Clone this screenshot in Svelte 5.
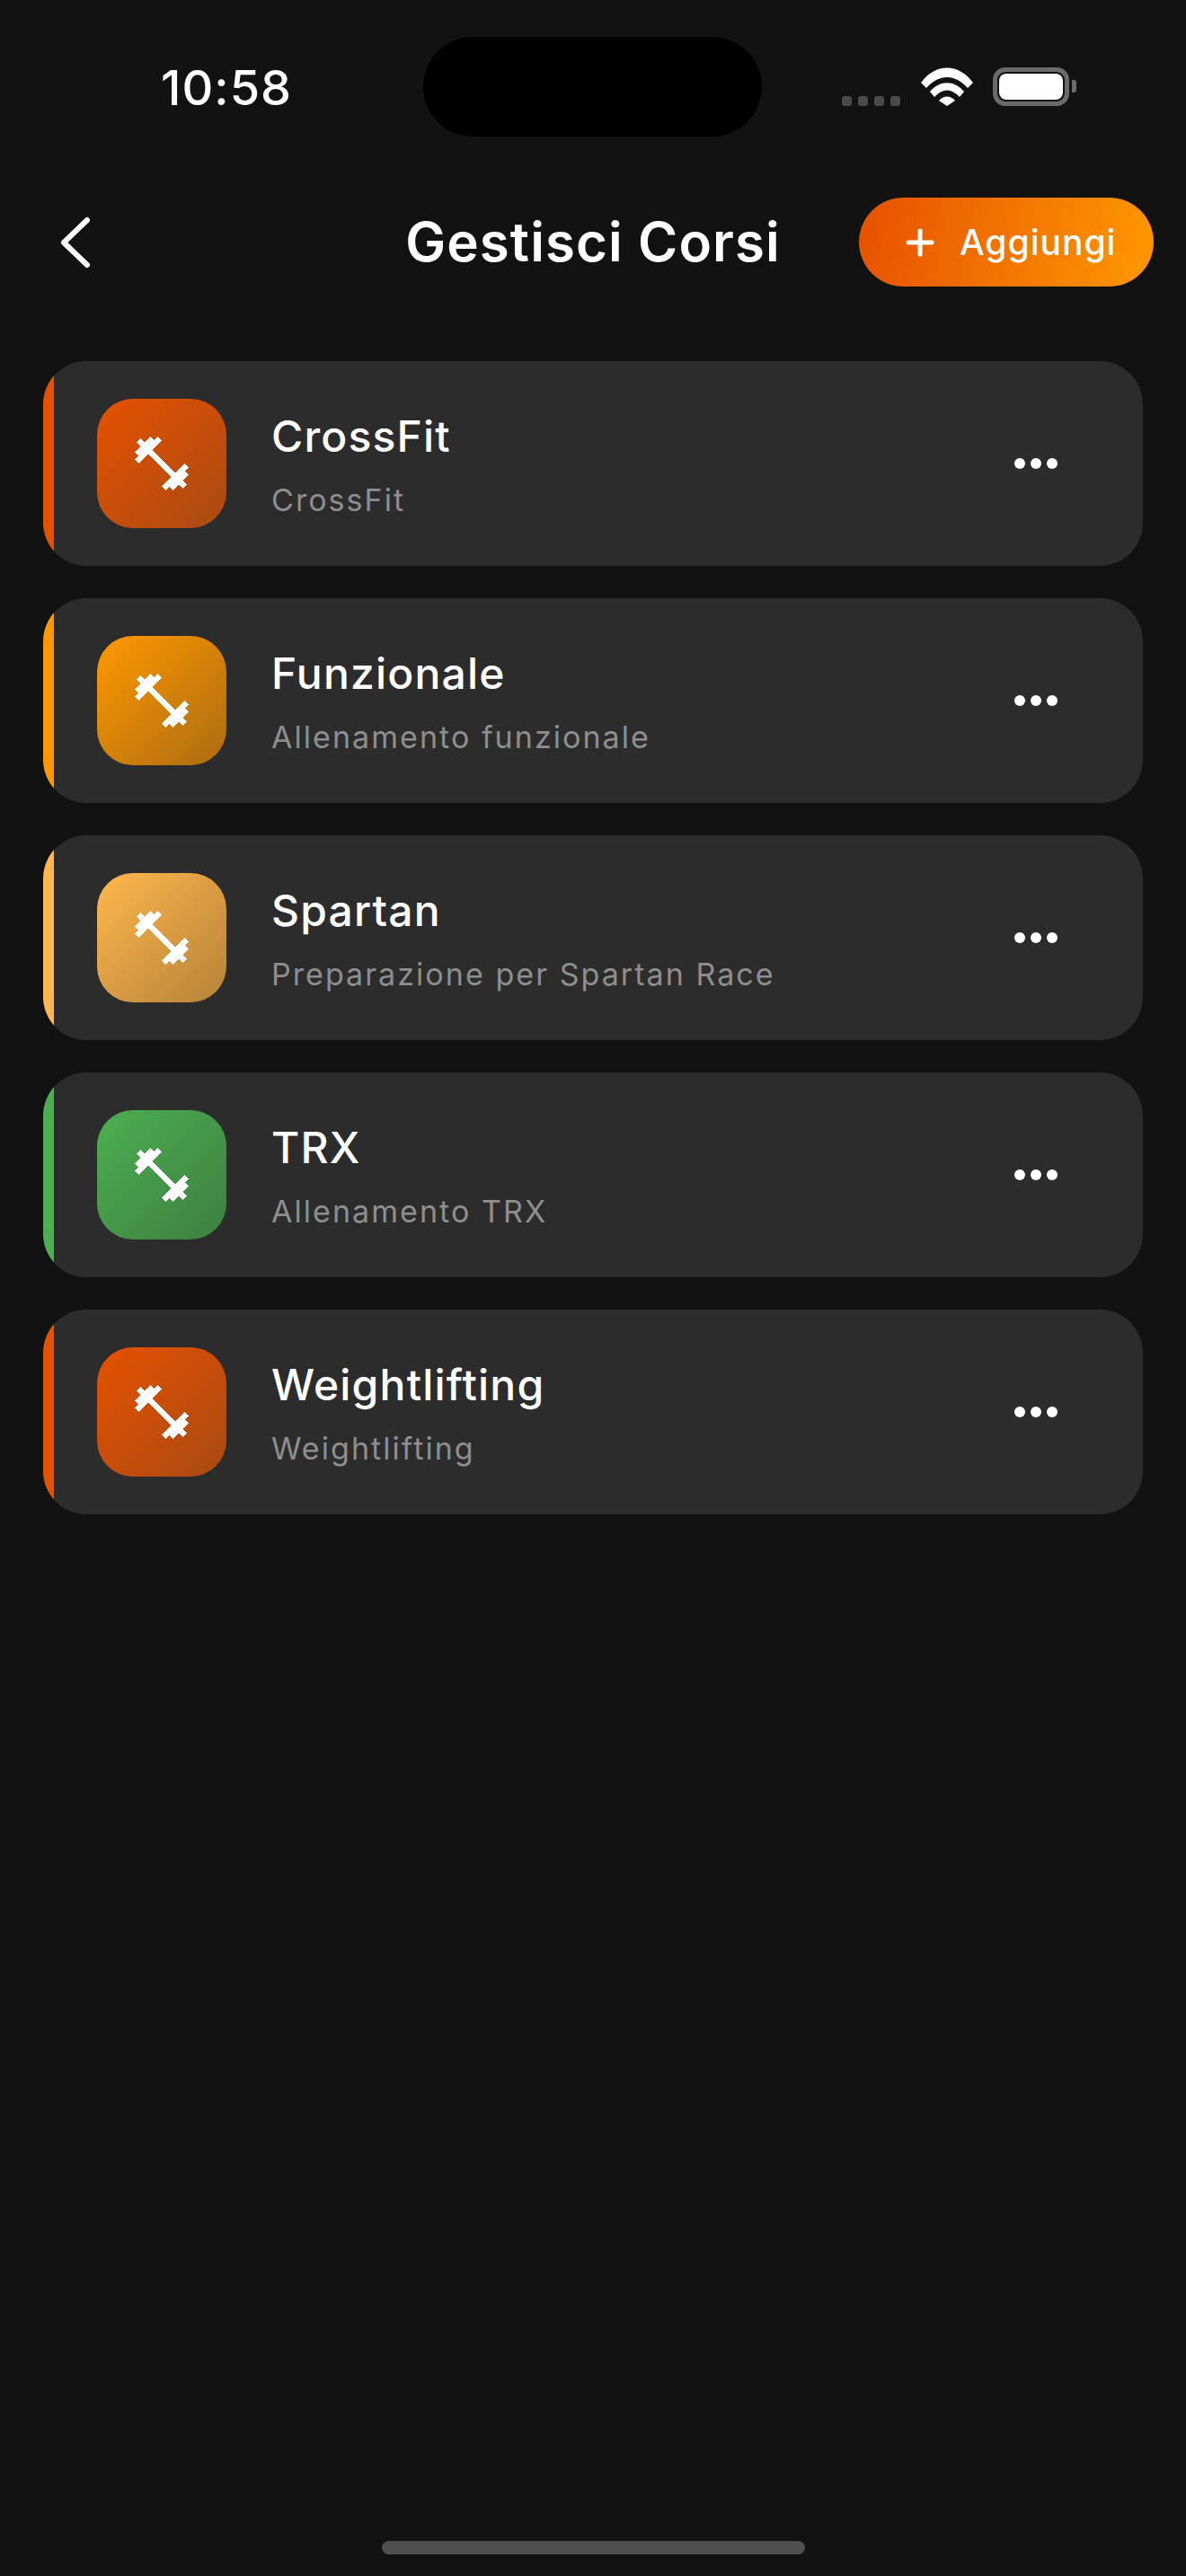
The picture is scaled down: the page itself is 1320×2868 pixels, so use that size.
<script lang="ts">
	const courses = [
		{ name: 'CrossFit', sub: 'CrossFit', from: '#e65100', to: '#a84a14' },
		{ name: 'Funzionale', sub: 'Allenamento funzionale', from: '#ff9800', to: '#ab6c12' },
		{ name: 'Spartan', sub: 'Preparazione per Spartan Race', from: '#ffb74d', to: '#b58238' },
		{ name: 'TRX', sub: 'Allenamento TRX', from: '#4caf50', to: '#3e7e41' },
		{ name: 'Weightlifting', sub: 'Weightlifting', from: '#e65100', to: '#a84a14' }
	];
</script>

<div class="page">
	<div class="status">
		<span class="time">10:58</span>
		<div class="island"></div>
		<div class="status-icons">
			<div class="signal"><i></i><i></i><i></i><i></i></div>
			<svg class="wifi" width="58" height="43" viewBox="0 0 58 43" fill="#fff">
				<path d="M0 17 C16 -5 42 -5 58 17 L52 23 C38 7 20 7 6 23 Z" />
				<path d="M10 27 C21 14 37 14 48 27 L43 33 C34 23 24 23 15 33 Z" />
				<path d="M20 37 C25 31 33 31 38 37 L29 43 Z" />
			</svg>
			<div class="battery"><div class="level"></div></div>
			<div class="cap"></div>
		</div>
	</div>

	<header class="topbar">
		<button class="back" aria-label="Indietro">
			<svg width="36" height="60" viewBox="0 0 36 60" fill="none" stroke="#fff" stroke-width="6" stroke-linecap="round" stroke-linejoin="round">
				<path d="M31 5 L5 30 L31 55" />
			</svg>
		</button>
		<h1>Gestisci Corsi</h1>
		<button class="add">
			<svg width="32" height="32" viewBox="0 0 32 32" stroke="#fff" stroke-width="5" stroke-linecap="round">
				<path d="M16 3 V29 M3 16 H29" />
			</svg>
			Aggiungi
		</button>
	</header>

	<div class="list">
		{#each courses as c}
			<div class="card" style="--bar: {c.from}">
				<div class="icon" style="background: linear-gradient(135deg, {c.from}, {c.to})">
					<svg width="72" height="72" viewBox="0 0 24 24" fill="#fff" shape-rendering="crispEdges">
						<path d="M20.57 14.86L22 13.43 20.57 12 17 15.57 8.43 7 12 3.43 10.57 2 9.14 3.43 7.71 2 5.57 4.14 4.14 2.71 2.71 4.14l1.43 1.43L2 7.71l1.43 1.43L2 10.57 3.43 12 7 8.43 15.57 17 12 20.57 13.43 22l1.43-1.43L16.29 22l2.14-2.14 1.43 1.43 1.43-1.43-1.43-1.43L22 16.29z" />
					</svg>
				</div>
				<div class="text">
					<div class="name">{c.name}</div>
					<div class="sub">{c.sub}</div>
				</div>
				<div class="dots"><i></i><i></i><i></i></div>
			</div>
		{/each}
	</div>

	<div class="home"></div>
</div>

<style>
	:global(body) {
		margin: 0;
		background: #121212;
	}

	.page {
		height: 2868px;
		display: flex;
		flex-direction: column;
		font-family: Inter, 'Noto Sans', sans-serif;
		color: #fff;
		background: #121212;
	}

	.status {
		display: flex;
		align-items: flex-start;
		height: 220px;
		box-sizing: border-box;
		padding-top: 41px;
	}

	.time {
		width: 471px;
		box-sizing: border-box;
		padding: 27px 0 0 179px;
		font-size: 54px;
		line-height: 60px;
		font-weight: 500;
		letter-spacing: 1px;
	}

	.island {
		width: 377px;
		height: 111px;
		border-radius: 56px;
		background: #000;
	}

	.status-icons {
		display: flex;
		align-items: flex-end;
		height: 77px;
		margin-left: 89px;
	}

	.signal {
		display: flex;
		gap: 7px;
		margin-right: 23px;
	}

	.signal i {
		width: 11px;
		height: 11px;
		border-radius: 3px;
		background: #4a4a4a;
	}

	.wifi {
		margin-right: 22px;
	}

	.battery {
		box-sizing: border-box;
		width: 85px;
		height: 43px;
		border: 5px solid #6b6b6b;
		border-radius: 14px;
		padding: 2px;
		margin-right: 3px;
	}

	.level {
		height: 100%;
		background: #fff;
		border-radius: 8px;
	}

	.cap {
		width: 5px;
		height: 14px;
		background: #6b6b6b;
		border-radius: 0 3px 3px 0;
		margin-bottom: 15px;
	}

	.topbar {
		display: flex;
		align-items: center;
		height: 99px;
		padding: 0 36px 0 66px;
		position: relative;
	}

	.back {
		padding: 0;
		border: none;
		background: none;
		display: flex;
	}

	h1 {
		margin: 0;
		position: absolute;
		left: 0;
		right: 0;
		text-align: center;
		font-size: 60px;
		font-weight: 600;
		line-height: 99px;
		letter-spacing: 1.1px;
	}

	.add {
		margin-left: auto;
		position: relative;
		width: 328px;
		height: 99px;
		box-sizing: border-box;
		border: none;
		border-radius: 50px;
		background: linear-gradient(100deg, #e65100, #ff9800);
		color: #fff;
		font-family: inherit;
		font-size: 39px;
		font-weight: 500;
		letter-spacing: 1px;
		display: flex;
		align-items: center;
		gap: 28px;
		padding: 0 0 0 52px;
	}

	.list {
		display: flex;
		flex-direction: column;
		gap: 36px;
		margin: 83px 48px 0;
	}

	.card {
		height: 228px;
		box-sizing: border-box;
		display: flex;
		align-items: center;
		padding: 0 48px 0 60px;
		border-radius: 48px;
		background: linear-gradient(to right, var(--bar) 12px, #2c2c2c 12px);
	}

	.icon {
		width: 144px;
		height: 144px;
		border-radius: 40px;
		display: flex;
		align-items: center;
		justify-content: center;
		flex-shrink: 0;
	}

	.text {
		margin-left: 50px;
		padding-top: 3px;
		flex: 1;
	}

	.name {
		font-size: 48px;
		font-weight: 500;
		line-height: 60px;
		letter-spacing: 1.2px;
	}

	.sub {
		margin-top: 19px;
		font-size: 34px;
		line-height: 44px;
		color: #8e8e8e;
		letter-spacing: 2.05px;
	}

	.dots {
		display: flex;
		gap: 6px;
		margin-right: 47px;
	}

	.dots i {
		width: 12px;
		height: 12px;
		border-radius: 50%;
		background: #fff;
	}

	.home {
		margin: auto auto 24px;
		width: 471px;
		height: 15px;
		border-radius: 8px;
		background: #4f4f4f;
	}
</style>
